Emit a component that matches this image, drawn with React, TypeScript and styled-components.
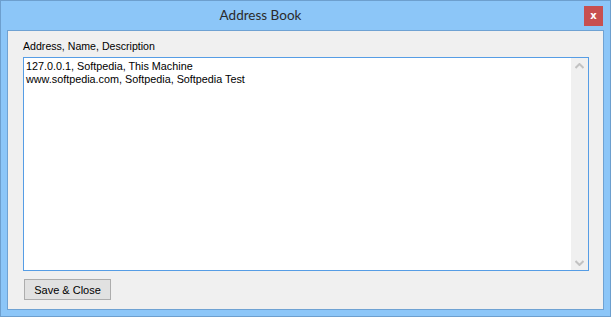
import styled, { createGlobalStyle } from "styled-components";

const GlobalStyle = createGlobalStyle`
  html, body {
    margin: 0;
    padding: 0;
    background: #8cc6f8;
  }
  * {
    box-sizing: border-box;
  }
`;

const Window = styled.div`
  width: 611px;
  height: 317px;
  border: 1px solid #6d9fce;
  background-color: #8cc6f8;
  display: flex;
  flex-direction: column;
  padding: 0 6px 6px 6px;
`;

const TitleBar = styled.div`
  height: 29px;
  display: flex;
  align-items: flex-start;
`;

const Title = styled.div`
  flex: 1;
  text-align: center;
  padding: 6px 70px 0 0;
  font-family: Lato, "Liberation Sans", sans-serif;
  font-size: 13.5px;
  color: #2b2b2b;
`;

const CloseButton = styled.div`
  width: 19px;
  height: 20px;
  margin: 5px 1px 0 0;
  background-color: #c75050;
  color: #fff;
  font-family: "DejaVu Sans", sans-serif;
  font-weight: bold;
  font-size: 10px;
  display: flex;
  align-items: center;
  justify-content: center;
  padding-bottom: 2px;
`;

const Client = styled.div`
  flex: 1;
  background-color: #f0f0f0;
  border: 1px solid #6fa2d3;
  display: flex;
  flex-direction: column;
  padding: 9px 14px 0 15px;
  font-family: "Liberation Sans", Arial, sans-serif;
  font-size: 11px;
  color: #000;
`;

const Label = styled.div`
  height: 17px;
  line-height: 13px;
  font-size: 10.6px;
`;

const TextBox = styled.div`
  height: 214px;
  border: 1px solid #569de5;
  background-color: #fff;
  display: flex;
`;

const Lines = styled.div`
  flex: 1;
  padding: 2px 0 0 2px;
  line-height: 13px;
  font-size: 10.8px;
`;

const ScrollBar = styled.div`
  width: 17px;
  background-color: #f0f0f0;
  display: flex;
  flex-direction: column;
  justify-content: space-between;
  align-items: center;
  padding: 5px 0 4px;
`;

const Arrow = styled.svg`
  display: block;
`;

const Footer = styled.div`
  padding-top: 8px;
  padding-left: 1px;
`;

const Button = styled.div`
  width: 87px;
  height: 21px;
  border: 1px solid #adadad;
  background-color: #e1e1e1;
  display: flex;
  align-items: center;
  justify-content: center;
  font-size: 11px;
`;

export default function App() {
  const entries = [
    "127.0.0.1, Softpedia, This Machine",
    "www.softpedia.com, Softpedia, Softpedia Test",
  ];
  return (
    <>
      <GlobalStyle />
      <Window>
        <TitleBar>
          <Title>Address Book</Title>
          <CloseButton>x</CloseButton>
        </TitleBar>
        <Client>
          <Label>Address, Name, Description</Label>
          <TextBox>
            <Lines>
              {entries.map((line) => (
                <div key={line}>{line}</div>
              ))}
            </Lines>
            <ScrollBar>
              <Arrow width="9" height="6" viewBox="0 0 9 6">
                <path d="M0.5 5 L4.5 1 L8.5 5" fill="none" stroke="#c2c2c2" strokeWidth="2" />
              </Arrow>
              <Arrow width="9" height="6" viewBox="0 0 9 6">
                <path d="M0.5 1 L4.5 5 L8.5 1" fill="none" stroke="#c2c2c2" strokeWidth="2" />
              </Arrow>
            </ScrollBar>
          </TextBox>
          <Footer>
            <Button>Save &amp; Close</Button>
          </Footer>
        </Client>
      </Window>
    </>
  );
}
